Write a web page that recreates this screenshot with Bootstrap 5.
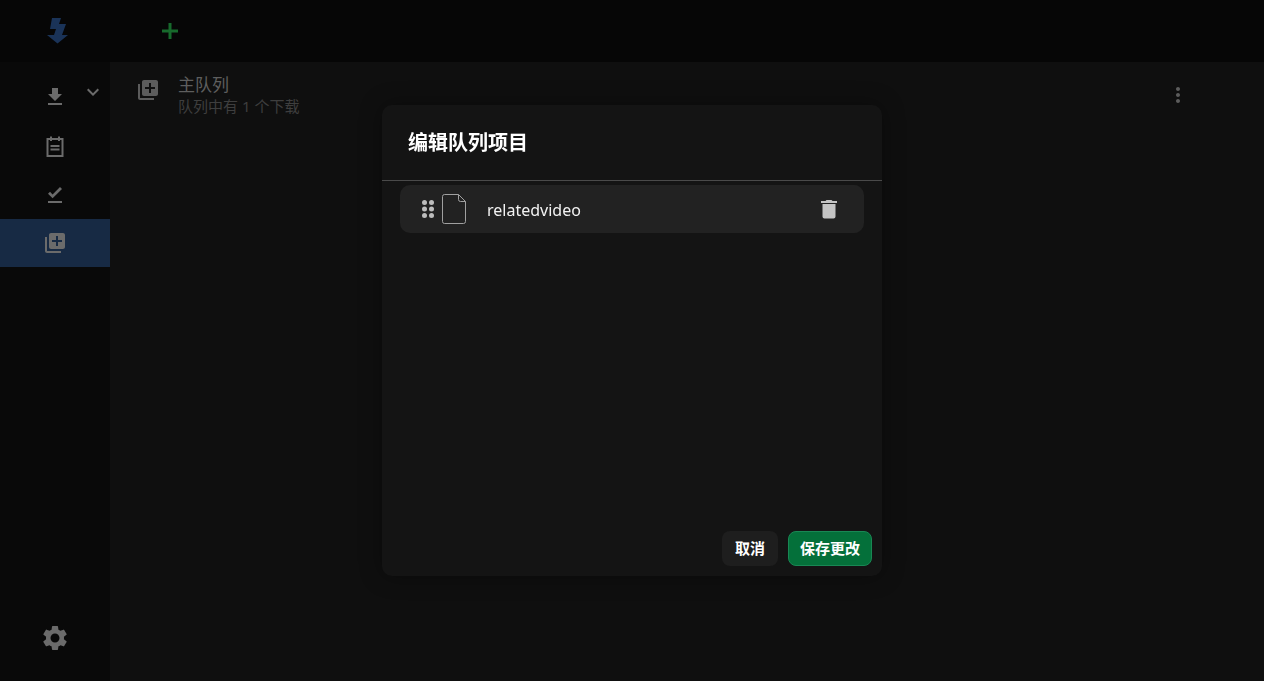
<!DOCTYPE html>
<html lang="zh-CN">
<head>
    <meta charset="UTF-8">
    <meta name="viewport" content="width=device-width, initial-scale=1.0">
    <link href="https://cdn.jsdelivr.net/npm/bootstrap@5.3.0/dist/css/bootstrap.min.css" rel="stylesheet">
    <title>编辑队列项目</title>
    <style>
        html, body { height: 100%; overflow: hidden; }
        body {
            background: #090909;
            font-family: "Noto Sans", "Noto Sans CJK SC", sans-serif;
            color: #fff;
        }
        .top-strip { height: 62px; background: #060606; }
        .logo-box { width: 110px; padding-left: 47px; line-height: 0; }
        .add-btn { margin-left: 47px; line-height: 0; }
        .side-rail { width: 110px; padding-top: 8px; }
        .rail-item { height: 48px; color: #6b6b6b; position: relative; }
        .rail-item.first-item { height: 53px; }
        .rail-item.active-item { background: #172a44; }
        .rail-chevron { position: absolute; left: 81px; top: 10px; }
        .rail-foot { padding-bottom: 28px; color: #6b6b6b; }
        .main-area { background: #0f0f0f; }
        .queue-head { padding: 13px 74px 0 26px; color: #5c5c5c; }
        .queue-icon { margin-top: 3px; }
        .queue-title { font-size: 17px; line-height: 20px; color: #5e5e5e; }
        .queue-sub { font-size: 15px; line-height: 20px; color: #3e3e3e; margin-top: 1px; }
        .queue-text { margin-left: 18px; }
        .edit-layer {
            position: fixed;
            left: 382px;
            top: 105px;
            width: 500px;
            height: 471px;
            background: #141414;
            border-radius: 10px;
            box-shadow: 0 0 22px rgba(0, 0, 0, .35);
        }
        .edit-head {
            height: 76px;
            padding-left: 26px;
            border-bottom: 1px solid #4a4a4a;
            font-size: 20px;
            font-weight: 700;
        }
        .edit-body { padding: 4px 18px 0; }
        .edit-row {
            height: 48px;
            background: #222;
            border-radius: 10px;
            padding-left: 16px;
            padding-right: 23px;
        }
        .row-name { font-size: 16px; margin-left: 21px; color: #f2f2f2; padding-top: 2px; }
        .row-file { margin-left: 2px; }
        .edit-foot { padding: 0 10px 10px 0; gap: 10px; }
        .btn-cancel, .btn-save {
            height: 35px;
            padding: 0;
            font-size: 15px;
            font-weight: 700;
            border-radius: 8px;
            color: #fff;
        }
        .btn-cancel { width: 56px; background: #1e1e1e; border: 0; }
        .btn-save { width: 84px; background: #04703a; border: 1px solid #198754; }
    </style>
</head>
<body>
    <div class="d-flex flex-column h-100">
        <div class="top-strip d-flex align-items-center">
            <div class="logo-box">
                <svg width="21" height="26" viewBox="0 0 21 26"><path fill="#1a3358" d="M5 0h9l-2 6h7l-4 11h6l-10.500 8.500L0 17h7l2-6H3z"/></svg>
            </div>
            <div class="add-btn">
                <svg width="26" height="26" viewBox="0 0 26 26" fill="#176a2c"><path d="M21 14.500h-6.500V21h-3v-6.500H5v-3h6.500V5h3v6.500H21z"/></svg>
            </div>
        </div>
        <div class="d-flex flex-grow-1">
            <nav class="side-rail d-flex flex-column">
                <div class="rail-item first-item d-flex align-items-center justify-content-center">
                    <svg width="24" height="24" viewBox="0 0 24 24" fill="currentColor"><path d="M19 9h-4V3H9v6H5l7 7 7-7zM5 18v2h14v-2H5z"/></svg>
                    <svg class="rail-chevron" width="24" height="24" viewBox="0 0 24 24" fill="currentColor"><path d="M16.59 8.59L12 13.17 7.41 8.59 6 10l6 6 6-6z"/></svg>
                </div>
                <div class="rail-item d-flex align-items-center justify-content-center">
                    <svg width="24" height="24" viewBox="0 0 24 24" fill="none" stroke="currentColor" stroke-width="2"><path d="M4.500 4h15v17h-15zM8 1.500V6M16 1.500V6M7.500 11h9M7.500 14.500h9"/></svg>
                </div>
                <div class="rail-item d-flex align-items-center justify-content-center">
                    <svg width="24" height="24" viewBox="0 0 24 24" fill="currentColor"><path d="M5 18h14v2H5v-2zm4.600-2.700L5 10.700l2-1.900 2.600 2.600L17 4l2 2-9.400 9.300z"/></svg>
                </div>
                <div class="rail-item active-item d-flex align-items-center justify-content-center">
                    <svg width="24" height="24" viewBox="0 0 24 24" fill="currentColor"><path d="M4 6H2v14c0 1.100.9 2 2 2h14v-2H4V6zm16-4H8c-1.100 0-2 .9-2 2v12c0 1.100.9 2 2 2h12c1.100 0 2-.9 2-2V4c0-1.100-.9-2-2-2zm-1 9h-4v4h-2v-4H9V9h4V5h2v4h4v2z"/></svg>
                </div>
                <div class="rail-foot mt-auto d-flex justify-content-center">
                    <svg width="30" height="30" viewBox="0 0 24 24" fill="currentColor"><path d="M19.140 12.940c.04-.3.06-.61.06-.94 0-.32-.02-.64-.07-.94l2.030-1.580a.49.49 0 0 0 .12-.61l-1.920-3.320a.49.49 0 0 0-.59-.22l-2.390.96c-.5-.38-1.030-.7-1.620-.94l-.36-2.540a.48.48 0 0 0-.48-.41h-3.840c-.24 0-.43.17-.47.41l-.36 2.540c-.59.24-1.130.57-1.620.94l-2.390-.96c-.22-.08-.47 0-.59.22L2.740 8.870c-.12.21-.08.47.12.61l2.030 1.580c-.05.3-.09.63-.09.94s.02.64.07.94l-2.030 1.580a.49.49 0 0 0-.12.61l1.920 3.320c.12.22.37.29.59.22l2.390-.96c.5.38 1.030.7 1.620.94l.36 2.540c.05.24.24.41.48.41h3.840c.24 0 .44-.17.47-.41l.36-2.540c.59-.24 1.130-.56 1.620-.94l2.390.96c.22.08.47 0 .59-.22l1.920-3.320c.12-.22.07-.47-.12-.61l-2.010-1.580zM12 15.600c-1.980 0-3.600-1.620-3.600-3.600s1.620-3.600 3.600-3.600 3.600 1.620 3.600 3.600-1.620 3.600-3.600 3.600z"/></svg>
                </div>
            </nav>
            <main class="main-area flex-grow-1">
                <div class="queue-head d-flex align-items-start">
                    <svg class="queue-icon" width="24" height="24" viewBox="0 0 24 24" fill="currentColor"><path d="M4 6H2v14c0 1.100.9 2 2 2h14v-2H4V6zm16-4H8c-1.100 0-2 .9-2 2v12c0 1.100.9 2 2 2h12c1.100 0 2-.9 2-2V4c0-1.100-.9-2-2-2zm-1 9h-4v4h-2v-4H9V9h4V5h2v4h4v2z"/></svg>
                    <div class="queue-text">
                        <div class="queue-title">主队列</div>
                        <div class="queue-sub">队列中有 1 个下载</div>
                    </div>
                    <svg class="ms-auto mt-2" width="24" height="24" viewBox="0 0 24 24" fill="currentColor"><path d="M12 8c1.100 0 2-.9 2-2s-.9-2-2-2-2 .9-2 2 .9 2 2 2zm0 2c-1.100 0-2 .9-2 2s.9 2 2 2 2-.9 2-2-.9-2-2-2zm0 6c-1.100 0-2 .9-2 2s.9 2 2 2 2-.9 2-2-.9-2-2-2z"/></svg>
                </div>
            </main>
        </div>
    </div>

    <div class="edit-layer d-flex flex-column" role="dialog">
        <div class="edit-head d-flex align-items-center">编辑队列项目</div>
        <div class="edit-body flex-grow-1">
            <div class="edit-row d-flex align-items-center">
                <svg width="24" height="24" viewBox="0 0 24 24" fill="#bdbdbd"><circle cx="8.500" cy="5.500" r="2.500"/><circle cx="8.500" cy="12" r="2.500"/><circle cx="8.500" cy="18.500" r="2.500"/><circle cx="15.500" cy="5.500" r="2.500"/><circle cx="15.500" cy="12" r="2.500"/><circle cx="15.500" cy="18.500" r="2.500"/></svg>
                <svg class="row-file" width="24" height="30" viewBox="0 0 24 30" fill="none" stroke="#a0a0a0"><path d="M2.500.5h14l7 7v20a2 2 0 0 1-2 2h-19a2 2 0 0 1-2-2v-25a2 2 0 0 1 2-2zM16.500.5v5a2 2 0 0 0 2 2h5"/></svg>
                <span class="row-name">relatedvideo</span>
                <svg class="ms-auto" width="24" height="24" viewBox="0 0 24 24" fill="#c4c4c4"><path d="M5.500 19.500c0 1.100.9 2 2 2h9c1.100 0 2-.9 2-2V7h-13v12.500zM20 4h-4.500l-1-1h-5l-1 1H4v2h16V4z"/></svg>
            </div>
        </div>
        <div class="edit-foot d-flex justify-content-end">
            <button type="button" class="btn btn-cancel">取消</button>
            <button type="button" class="btn btn-save">保存更改</button>
        </div>
    </div>
</body>
</html>
